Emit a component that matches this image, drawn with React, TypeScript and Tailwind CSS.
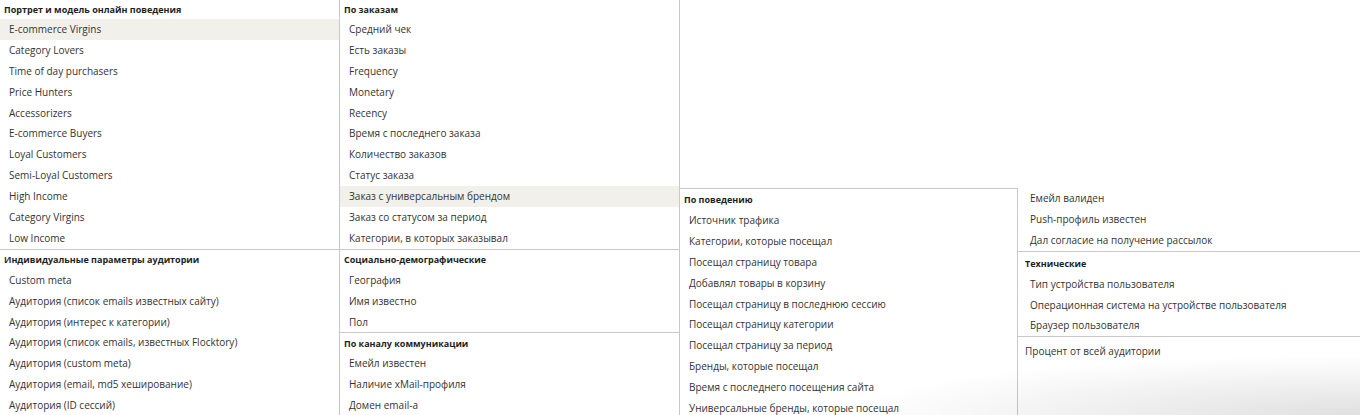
import React from "react";

type Section = {
  title?: string;
  items: string[];
  active?: string;
};

const portrait: Section[] = [
  {
    title: "Портрет и модель онлайн поведения",
    active: "E-commerce Virgins",
    items: [
      "E-commerce Virgins",
      "Category Lovers",
      "Time of day purchasers",
      "Price Hunters",
      "Accessorizers",
      "E-commerce Buyers",
      "Loyal Customers",
      "Semi-Loyal Customers",
      "High Income",
      "Category Virgins",
      "Low Income",
    ],
  },
  {
    title: "Индивидуальные параметры аудитории",
    items: [
      "Custom meta",
      "Аудитория (список emails известных сайту)",
      "Аудитория (интерес к категории)",
      "Аудитория (список emails, известных Flocktory)",
      "Аудитория (custom meta)",
      "Аудитория (email, md5 хеширование)",
      "Аудитория (ID сессий)",
    ],
  },
];

const orders: Section[] = [
  {
    title: "По заказам",
    active: "Заказ с универсальным брендом",
    items: [
      "Средний чек",
      "Есть заказы",
      "Frequency",
      "Monetary",
      "Recency",
      "Время с последнего заказа",
      "Количество заказов",
      "Статус заказа",
      "Заказ с универсальным брендом",
      "Заказ со статусом за период",
      "Категории, в которых заказывал",
    ],
  },
  {
    title: "Социально-демографические",
    items: ["География", "Имя известно", "Пол"],
  },
  {
    title: "По каналу коммуникации",
    items: ["Емейл известен", "Наличие xMail-профиля", "Домен email-a"],
  },
];

const behaviour: Section = {
  title: "По поведению",
  items: [
    "Источник трафика",
    "Категории, которые посещал",
    "Посещал страницу товара",
    "Добавлял товары в корзину",
    "Посещал страницу в последнюю сессию",
    "Посещал страницу категории",
    "Посещал страницу за период",
    "Бренды, которые посещал",
    "Время с последнего посещения сайта",
    "Универсальные бренды, которые посещал",
  ],
};

const channelTail = ["Емейл валиден", "Push-профиль известен", "Дал согласие на получение рассылок"];

const technical: Section = {
  title: "Технические",
  items: [
    "Тип устройства пользователя",
    "Операционная система на устройстве пользователя",
    "Браузер пользователя",
  ],
};

const MenuSection = ({ section, first }: { section: Section; first?: boolean }) => (
  <div className={first ? "" : "border-t border-[#c9c9c9]"}>
    {section.title && (
      <div
        className={`${first ? "h-[19px]" : "h-[20px]"} flex items-center pl-[4px] text-[9px] font-bold text-[#1e1e1e]`}
      >
        {section.title}
      </div>
    )}
    {section.items.map((item) => (
      <div
        key={item}
        className={`h-[20.9px] flex items-center pl-[9px] text-[10px] text-[#333] cursor-pointer ${
          section.active === item ? "bg-[#f1f0eb]" : ""
        }`}
      >
        {item}
      </div>
    ))}
  </div>
);

const App = () => {
  return (
    <div
      className="relative h-[415px] w-[1360px] overflow-hidden bg-white"
      style={{ fontFamily: '"Open Sans", "Noto Sans", sans-serif' }}
    >
      <div className="flex items-start">
        <div className="w-[340px] h-[415px] border-r border-[#c9c9c9]">
          {portrait.map((s, i) => (
            <MenuSection key={i} section={s} first={i === 0} />
          ))}
        </div>

        <div className="w-[340px] h-[415px] border-r border-[#c9c9c9]">
          {orders.map((s, i) => (
            <MenuSection key={i} section={s} first={i === 0} />
          ))}
        </div>

        <div className="mt-[188px] w-[338px] h-[227px] border-t border-r border-[#c9c9c9]">
          <div className="h-[21px] flex items-center pl-[4px] text-[9px] font-bold text-[#1e1e1e]">
            {behaviour.title}
          </div>
          {behaviour.items.map((item) => (
            <div key={item} className="h-[20.9px] flex items-center pl-[9px] text-[10px] text-[#333]">
              {item}
            </div>
          ))}
        </div>

        {/* scrolled list: tail of the channel group, then technical */}
        <div className="mt-[188px] flex-1 h-[227px]">
          {channelTail.map((item) => (
            <div key={item} className="h-[20.9px] flex items-center pl-[12px] text-[10px] text-[#333]">
              {item}
            </div>
          ))}
          <div className="border-t border-[#c9c9c9]">
            <div className="h-[22px] pt-[2px] flex items-center pl-[7px] text-[9px] font-bold text-[#1e1e1e]">
              {technical.title}
            </div>
            {technical.items.map((item) => (
              <div key={item} className="h-[20.9px] flex items-center pl-[12px] text-[10px] text-[#333]">
                {item}
              </div>
            ))}
          </div>
          <div className="border-t border-[#c9c9c9] pt-[6px] h-[24px] flex items-center pl-[7px] text-[10px] text-[#333]">
            Процент от всей аудитории
          </div>
        </div>
      </div>

      {/* soft shadow from the popover below */}
      <div className="pointer-events-none absolute right-0 bottom-0 h-[60px] w-[520px] bg-[radial-gradient(ellipse_at_bottom_right,rgba(0,0,0,0.12),rgba(0,0,0,0)_70%)]" />
    </div>
  );
};

export default App;
